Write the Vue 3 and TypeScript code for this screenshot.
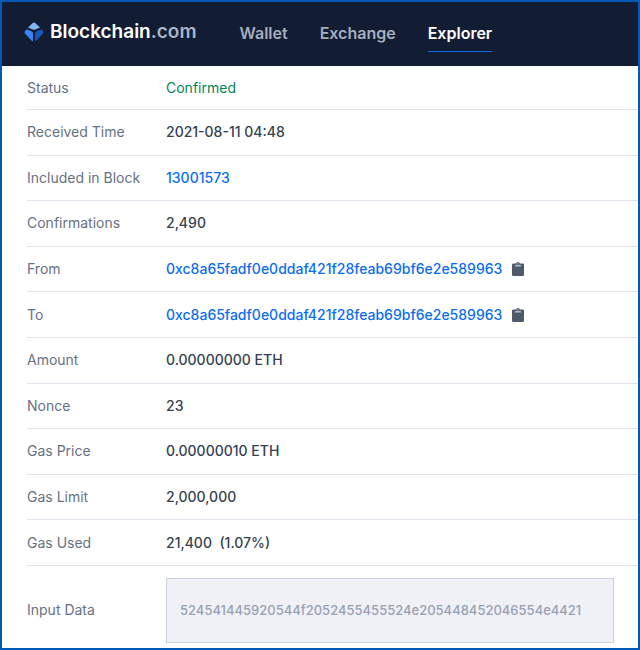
<script setup lang="ts">
interface Row {
  label: string
  value: string
  kind?: 'status' | 'link' | 'address'
}

const navItems = [
  { label: 'Wallet', active: false },
  { label: 'Exchange', active: false },
  { label: 'Explorer', active: true },
]

const address = '0xc8a65fadf0e0ddaf421f28feab69bf6e2e589963'
const inputData = '524541445920544f2052455455524e205448452046554e4421'

const rows: Row[] = [
  { label: 'Status', value: 'Confirmed', kind: 'status' },
  { label: 'Received Time', value: '2021-08-11 04:48' },
  { label: 'Included in Block', value: '13001573', kind: 'link' },
  { label: 'Confirmations', value: '2,490' },
  { label: 'From', value: address, kind: 'address' },
  { label: 'To', value: address, kind: 'address' },
  { label: 'Amount', value: '0.00000000 ETH' },
  { label: 'Nonce', value: '23' },
  { label: 'Gas Price', value: '0.00000010 ETH' },
  { label: 'Gas Limit', value: '2,000,000' },
  { label: 'Gas Used', value: '21,400\u00a0 (1.07%)' },
]

function copy(text: string) {
  navigator.clipboard?.writeText(text)
}
</script>

<template>
  <div class="page">
    <header class="topbar">
      <a class="brand" href="#">
        <svg class="logo" viewBox="0 0 20 20" aria-hidden="true">
          <path d="M10 0.4 Q10.5 0.4 10.9 0.8 L16 5.6 L11.3 7.4 Q10 7.9 8.7 7.4 L4 5.6 L9.1 0.8 Q9.5 0.4 10 0.4Z" fill="#85b5f8" />
          <path d="M2.4 7.2 L7.9 9.6 Q9 10.1 9 11.4 V19.3 Q8.4 19.3 7.8 18.7 L0.9 11.4 Q0.2 10.4 0.9 9.3Z" fill="#3585f7" />
          <path d="M17.6 7.2 L12.1 9.6 Q11 10.1 11 11.4 V19.3 Q11.6 19.3 12.2 18.7 L19.1 11.4 Q19.8 10.4 19.1 9.3Z" fill="#1656b9" />
        </svg>
        <span class="wordmark">Blockchain<span class="tld">.com</span></span>
      </a>
      <nav class="nav">
        <a v-for="item in navItems" :key="item.label" href="#" class="tab" :class="{ active: item.active }">{{ item.label }}</a>
      </nav>
    </header>

    <dl class="details">
      <div v-for="row in rows" :key="row.label" class="row">
        <dt>{{ row.label }}</dt>
        <dd>
          <a v-if="row.kind === 'link' || row.kind === 'address'" href="#">{{ row.value }}</a>
          <span v-else :class="row.kind">{{ row.value }}</span>
          <button v-if="row.kind === 'address'" type="button" class="copy" :aria-label="`Copy ${row.label} address`" @click="copy(row.value)">
            <svg viewBox="0 0 12 14" aria-hidden="true">
              <path d="M1.3 1.5 H4 Q4.4 0 6 0 Q7.6 0 8 1.5 H10.7 Q12 1.5 12 2.8 V12.7 Q12 14 10.7 14 H1.3 Q0 14 0 12.7 V2.8 Q0 1.5 1.3 1.5Z" fill="#50596b" />
              <path d="M3.2 2.8 H8.8 V4.6 H3.2Z" fill="#b0b5c0" />
              <circle cx="6" cy="1.7" r="0.6" fill="#b0b5c0" />
            </svg>
          </button>
        </dd>
      </div>
      <div class="row data">
        <dt><label for="input-data">Input Data</label></dt>
        <dd><input id="input-data" type="text" readonly :value="inputData" /></dd>
      </div>
    </dl>
  </div>
</template>

<style>
body {
  margin: 0;
  background: #fff;
}
</style>

<style scoped>
.page {
  box-sizing: border-box;
  min-height: 100vh;
  display: flex;
  flex-direction: column;
  border: 2px solid #0359b8;
  font-family: Inter, 'Liberation Sans', sans-serif;
  background: #fff;
}

a {
  text-decoration: none;
}

.topbar {
  box-sizing: border-box;
  display: flex;
  align-items: center;
  gap: 43px;
  height: 64px;
  padding: 0 0 2px 22px;
  background: #121d33;
}

.brand {
  display: flex;
  align-items: center;
  gap: 6px;
  padding-bottom: 3px;
  color: #fff;
}

.logo {
  width: 20px;
  height: 20px;
}

.wordmark {
  font-size: 19px;
  line-height: 24px;
  font-weight: 600;
}

.tld {
  color: #a9b4c8;
}

.nav {
  display: flex;
  gap: 32px;
}

.tab {
  padding: 8px 0;
  border-bottom: 1px solid transparent;
  color: #a5aebe;
  font-size: 16px;
  line-height: 20px;
  font-weight: 600;
}

.tab.active {
  color: #fff;
  border-bottom-color: #0c6cf2;
}

.details {
  flex: 1;
  display: grid;
  grid-template-rows: 44px repeat(10, minmax(45px, 1fr)) 82px;
  margin: 0;
  padding-left: 25px;
}

.row {
  display: grid;
  grid-template-columns: 139px 1fr;
  align-items: center;
  border-bottom: 1px solid #dfe3eb;
  font-size: 14px;
  line-height: 20px;
  color: #353f52;
}

dt {
  color: #677184;
}

dd {
  display: flex;
  align-items: center;
  gap: 10px;
  margin: 0;
  font-weight: 500;
}

dd a {
  color: #0c6cf2;
}

.status {
  color: #00875a;
  font-weight: 400;
}

.copy {
  display: flex;
  padding: 0;
  border: 0;
  background: none;
  cursor: pointer;
}

.copy svg {
  width: 12px;
  height: 14px;
}

.data {
  border-bottom: 0;
  padding: 12px 24px 5px 0;
}

input {
  box-sizing: border-box;
  width: 100%;
  height: 65px;
  padding: 0 13px;
  border: 1px solid #c9d2df;
  border-radius: 0;
  background: #f0f1f7;
  color: #98a1b2;
  font-family: inherit;
  font-size: 13px;
  font-weight: 500;
  outline: none;
}
</style>
